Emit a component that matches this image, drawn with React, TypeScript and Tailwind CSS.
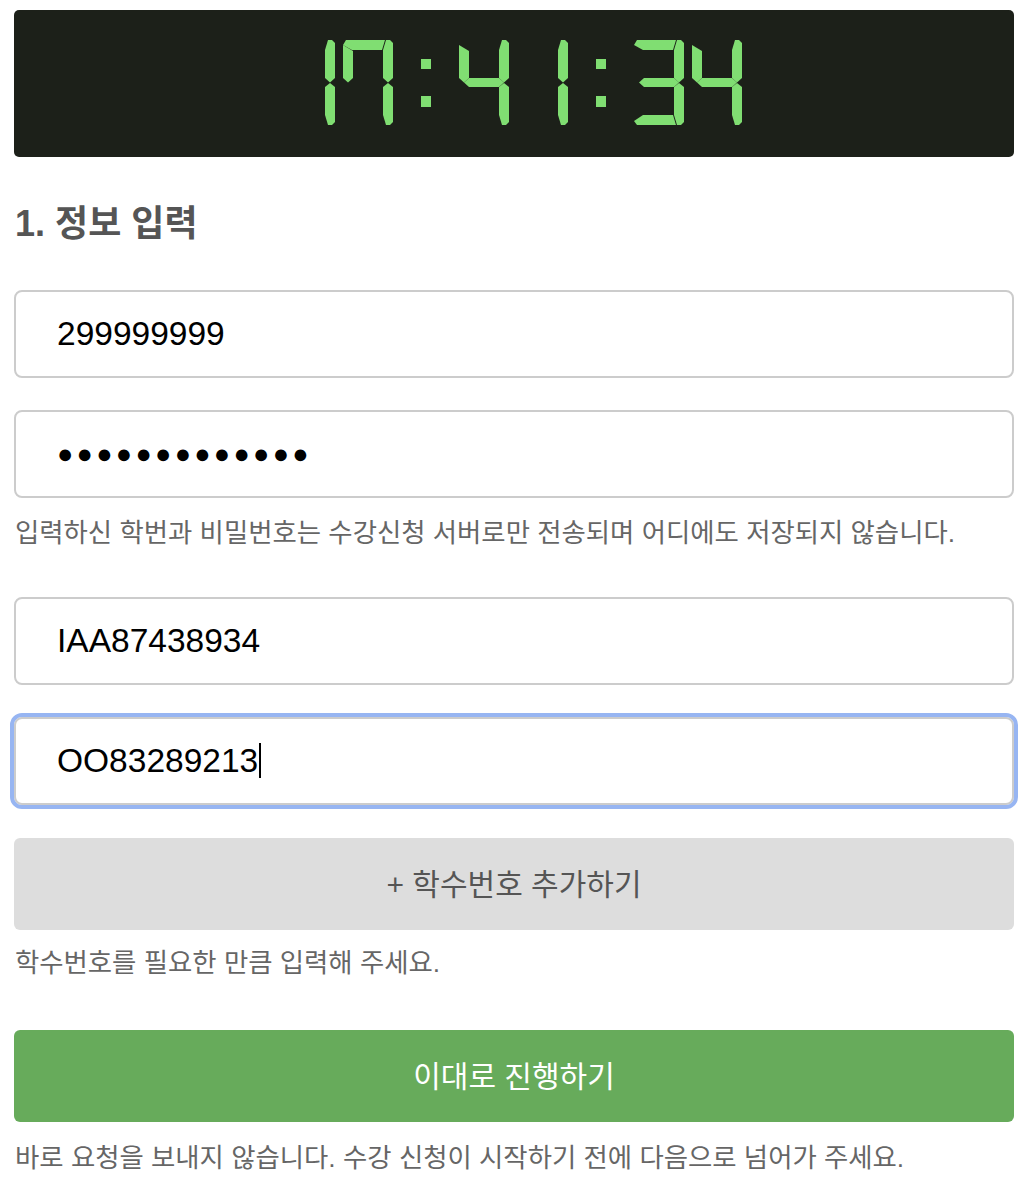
import React from 'react';

// seven segment shapes, local digit cell 50 x 85
const SEGMENTS: Record<string, string> = {
  a: '3,0 42,0 39,10 9,10 0,5',
  b: '43,0 47,0 50,3 50,38 45,42.5 40,38 40,10',
  c: '40,47 45,43 50,47 50,82 47,85 43,85 40,75',
  d: '9,75 39,75 42,85 3,85 0,81',
  e: '0,47 5,43 10,47 10,75 0,80',
  f: '0,5 10,11 10,38 5,42.5 0,38',
  g: '5,42.5 10,38 40,38 45,42.5 40,47 10,47',
};

const DIGITS: Record<string, string[]> = {
  '0': ['a', 'b', 'c', 'd', 'e', 'f'],
  '1': ['b', 'c'],
  '2': ['a', 'b', 'd', 'e', 'g'],
  '3': ['a', 'b', 'c', 'd', 'g'],
  '4': ['b', 'c', 'f', 'g'],
  '5': ['a', 'c', 'd', 'f', 'g'],
  '6': ['a', 'c', 'd', 'e', 'f', 'g'],
  '7': ['a', 'b', 'c', 'f'],
  '8': ['a', 'b', 'c', 'd', 'e', 'f', 'g'],
  '9': ['a', 'b', 'c', 'd', 'f', 'g'],
};

const Digit = ({ value, x }: { value: string; x: number }) => (
  <g transform={`translate(${x} 0)`}>
    {DIGITS[value].map((s) => (
      <polygon key={s} points={SEGMENTS[s]} fill="#80de72" />
    ))}
  </g>
);

const Colon = ({ x }: { x: number }) => (
  <g transform={`translate(${x} 0)`}>
    <rect x="0" y="19" width="10" height="10" fill="#80de72" />
    <rect x="0" y="56" width="10" height="11" fill="#80de72" />
  </g>
);

const Clock = () => (
  <div className="flex h-[147px] w-full items-center justify-center rounded-[5px] bg-[#1c2019]">
    <svg width="458" height="85" viewBox="0 0 458 85" className="mt-[-2px]">
      <Digit value="1" x={0} />
      <Digit value="7" x={58} />
      <Colon x={136} />
      <Digit value="4" x={174} />
      <Digit value="1" x={233} />
      <Colon x={311} />
      <Digit value="3" x={349} />
      <Digit value="4" x={407} />
    </svg>
  </div>
);

const Field = ({ value, password, focused }: { value: string; password?: boolean; focused?: boolean }) => (
  <div
    className={`flex h-[88px] w-full items-center rounded-[8px] border-2 border-[#cccccc] bg-white pl-[41px] ${
      focused ? 'outline-[4px] outline-solid outline-[#97b5f2]' : ''
    }`}
  >
    {password ? (
      <span className="text-[27px] tracking-[3.3px] text-black">{'●'.repeat(13)}</span>
    ) : (
      <span className="text-[33.5px] text-black">
        {value}
        {focused && <span className="ml-[1px] inline-block h-[35px] w-[1.5px] bg-black align-[-6px]"></span>}
      </span>
    )}
  </div>
);

const Hint = ({ children }: { children: React.ReactNode }) => (
  <p className="pl-[1px] text-[26.4px] leading-[36px] whitespace-nowrap text-[#666666]">{children}</p>
);

export default function App() {
  return (
    <div
      className="min-h-[1182px] bg-white pt-[10px]"
      style={{ fontFamily: '"Liberation Sans", "Noto Sans CJK KR", sans-serif' }}
    >
      <div className="ml-[14px] w-[1000px]">
        <Clock />

        <h1 className="mt-[45px] pl-[1px] text-[36px] font-bold leading-[44px] text-[#555555]">1. 정보 입력</h1>

        <div className="mt-[44px] flex flex-col gap-[32px]">
          <Field value="299999999" />
          <Field value="" password />
        </div>
        <div className="mt-[17px]">
          <Hint>입력하신 학번과 비밀번호는 수강신청 서버로만 전송되며 어디에도 저장되지 않습니다.</Hint>
        </div>

        <div className="mt-[46px] flex flex-col gap-[32px]">
          <Field value="IAA87438934" />
          <Field value="OO83289213" focused />
        </div>

        <button className="mt-[33px] flex h-[92px] w-full items-center justify-center rounded-[6px] bg-[#dddddd] text-[30px] text-[#555555]">
          + 학수번호 추가하기
        </button>
        <div className="mt-[15px]">
          <Hint>학수번호를 필요한 만큼 입력해 주세요.</Hint>
        </div>

        <button className="mt-[49px] flex h-[92px] w-full items-center justify-center rounded-[6px] bg-[#67ab5b] text-[30px] text-white">
          이대로 진행하기
        </button>
        <div className="mt-[18px]">
          <Hint>바로 요청을 보내지 않습니다. 수강 신청이 시작하기 전에 다음으로 넘어가 주세요.</Hint>
        </div>
      </div>
    </div>
  );
}
